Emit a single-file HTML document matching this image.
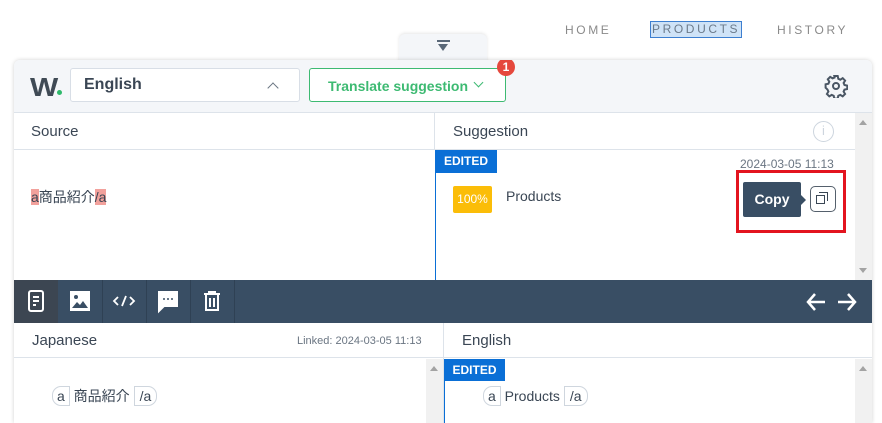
<!DOCTYPE html>
<html><head><meta charset="utf-8"><style>
*{box-sizing:border-box;margin:0;padding:0}
body{width:882px;height:423px;overflow:hidden;background:#fff;font-family:"Liberation Sans","Noto Sans CJK JP",sans-serif;color:#3a4654;position:relative}
.abs{position:absolute}
.nav{top:23px;font-size:12px;letter-spacing:2.6px;color:#8a8a8a}
</style></head><body>
<div class="abs nav" style="left:565px">HOME</div>
<div class="abs nav" style="left:651px;color:#6b7a8a;background:#cfe3f7;outline:1px solid #3d7fd0;padding:0 1px;top:22px;height:15px">PRODUCTS</div>
<div class="abs nav" style="left:777px">HISTORY</div>
<div class="abs" style="left:399px;top:34px;width:88px;height:30px;background:#f4f6f9;border-radius:6px 6px 0 0;box-shadow:0 -1px 3px rgba(0,0,0,.1)"></div>
<div class="abs" style="left:437px;top:40px;width:13px;height:2px;background:#5a6878"></div>
<div class="abs" style="left:438px;top:44px;width:0;height:0;border-left:5.5px solid transparent;border-right:5.5px solid transparent;border-top:7px solid #5a6878"></div>
<div class="abs" style="left:14px;top:60px;width:858px;height:363px;background:#fff;border-radius:6px 6px 0 0;box-shadow:0 0 4px rgba(0,0,0,.18);overflow:hidden">
 <div class="abs" style="left:0;top:0;width:858px;height:53px;background:#f4f6f9;border-bottom:1px solid #dde3ea"></div>
 <div class="abs" style="left:16px;top:12px;font-size:26px;font-weight:900;color:#3f4a55;letter-spacing:-1px;transform:scaleX(1.15);transform-origin:left">W</div>
 <div class="abs" style="left:43px;top:30px;width:5px;height:5px;border-radius:50%;background:#2eb96b"></div>
 <div class="abs" style="left:56px;top:8px;width:230px;height:34px;background:#fff;border:1px solid #d8dee6;border-radius:3px"></div>
 <div class="abs" style="left:70px;top:16px;font-size:16px;font-weight:bold;color:#3a4654">English</div>
 <div class="abs" style="left:255px;top:24px;width:8px;height:8px;border-left:1.5px solid #6a7582;border-top:1.5px solid #6a7582;transform:rotate(45deg)"></div>
 <div class="abs" style="left:295px;top:8px;width:197px;height:34px;background:#fff;border:1px solid #3dba72;border-radius:3px"></div>
 <div class="abs" style="left:314px;top:18px;font-size:14px;font-weight:bold;color:#3dba72">Translate suggestion</div>
 <div class="abs" style="left:461px;top:19px;width:7px;height:7px;border-right:1.5px solid #3dba72;border-bottom:1.5px solid #3dba72;transform:rotate(45deg)"></div>
 <div class="abs" style="left:483px;top:-2px;width:18px;height:18px;border-radius:50%;background:#e5483d;color:#fff;font-size:12px;font-weight:bold;text-align:center;line-height:18px">1</div>
 <svg class="abs" style="left:810px;top:14px" width="24" height="24" viewBox="0 0 24 24" fill="none" stroke="#4a5664" stroke-width="2"><path d="M10.3 2h3.4l.6 2.8 2 .9 2.4-1.5 2.4 2.4-1.5 2.4.9 2 2.8.6v3.4l-2.8.6-.9 2 1.5 2.4-2.4 2.4-2.4-1.5-2 .9-.6 2.8h-3.4l-.6-2.8-2-.9-2.4 1.5-2.4-2.4 1.5-2.4-.9-2L1.6 13.7v-3.4l2.8-.6.9-2-1.5-2.4 2.4-2.4 2.4 1.5 2-.9z"/><circle cx="12" cy="12" r="3"/></svg>
 <div class="abs" style="left:0;top:53px;width:841px;height:37px;border-bottom:1px solid #dde3ea"></div>
 <div class="abs" style="left:420px;top:53px;width:1px;height:37px;background:#dde3ea"></div>
 <div class="abs" style="left:17px;top:63px;font-size:15px">Source</div>
 <div class="abs" style="left:439px;top:63px;font-size:15px">Suggestion</div>
 <div class="abs" style="left:799px;top:61px;width:21px;height:21px;border:1.5px solid #cdd5de;border-radius:50%;color:#cdd5de;font-size:13px;text-align:center;line-height:18px">i</div>
 <div class="abs" style="left:841px;top:53px;width:17px;height:167px;background:#f1f1f1"></div>
 <div class="abs" style="left:845px;top:60px;border-left:4px solid transparent;border-right:4px solid transparent;border-bottom:5px solid #a3a3a3"></div>
 <div class="abs" style="left:845px;top:208px;border-left:4px solid transparent;border-right:4px solid transparent;border-top:5px solid #a3a3a3"></div>
 <div class="abs" style="left:17px;top:127px;font-size:14px;color:#3a4654"><span style="background:#f2a19c">a</span>商品紹介<span style="background:#f2a19c">/a</span></div>
 <div class="abs" style="left:421px;top:90px;width:1px;height:130px;background:#0a6fd6"></div>
 <div class="abs" style="left:421px;top:90px;width:62px;height:23px;background:#0a6fd6;color:#fff;font-size:12px;font-weight:bold;text-align:center;line-height:23px">EDITED</div>
 <div class="abs" style="left:726px;top:97px;font-size:12px;color:#6a7582">2024-03-05 11:13</div>
 <div class="abs" style="left:439px;top:126px;width:39px;height:27px;background:#fbbd08;border-radius:2px;color:#fff;font-size:12px;text-align:center;line-height:27px">100%</div>
 <div class="abs" style="left:492px;top:128px;font-size:14px">Products</div>
 <div class="abs" style="left:722px;top:110px;width:110px;height:63px;border:3px solid #e3141f"></div>
 <div class="abs" style="left:729px;top:122px;width:58px;height:35px;background:#394e64;border-radius:2px;color:#fff;font-weight:bold;font-size:14px;text-align:center;line-height:35px">Copy</div>
 <div class="abs" style="left:787px;top:135px;border-top:5px solid transparent;border-bottom:5px solid transparent;border-left:5px solid #394e64"></div>
 <div class="abs" style="left:796px;top:126px;width:26px;height:26px;border:1px solid #55606c;border-radius:5px"></div>
 <div class="abs" style="left:802px;top:135px;width:9px;height:9px;border:1.5px solid #3a4654"></div>
 <div class="abs" style="left:805px;top:132px;width:9px;height:9px;border-top:1.5px solid #3a4654;border-right:1.5px solid #3a4654"></div>
 <div class="abs" style="left:0;top:220px;width:858px;height:43px;background:#394e64"></div>
 <div class="abs" style="left:0;top:220px;width:44px;height:43px;background:#3c4652"></div>
 <div class="abs" style="left:88px;top:220px;width:1px;height:43px;background:#2f4154"></div>
 <div class="abs" style="left:132px;top:220px;width:1px;height:43px;background:#2f4154"></div>
 <div class="abs" style="left:176px;top:220px;width:1px;height:43px;background:#2f4154"></div>
 <div class="abs" style="left:220px;top:220px;width:1px;height:43px;background:#2f4154"></div>
 <svg class="abs" style="left:0;top:220px" width="240" height="43" fill="none" stroke="#fff" stroke-width="2">
  <rect x="15" y="11" width="14" height="20" rx="2"/><path d="M19 17h6M19 21h6M19 25h3"/>
  <rect x="57" y="12" width="18" height="18" fill="#fff"/><path d="M58 28l5-6 3 3 3-4 5 7z" fill="#394e64" stroke="none"/><circle cx="62" cy="17" r="2" fill="#394e64" stroke="none"/>
  <path d="M104 17l-4 4 4 4M116 17l4 4-4 4M108 26l4-10" stroke-width="1.8"/>
  <path d="M145 12h18v14h-13l-5 5z" fill="#fff"/><circle cx="150" cy="19" r="1" fill="#394e64" stroke="none"/><circle cx="154" cy="19" r="1" fill="#394e64" stroke="none"/><circle cx="158" cy="19" r="1" fill="#394e64" stroke="none"/>
  <path d="M190 14h16M195 14v-2h6v2M192 14v16h12v-16M196 18v9M200 18v9"/>
 </svg>
 <svg class="abs" style="left:790px;top:220px" width="68" height="43" fill="none" stroke="#fff" stroke-width="2.5"><path d="M4 22h17M11 14l-7 8 7 8M51 22h-17M44 14l7 8-7 8"/></svg>
 <div class="abs" style="left:0;top:263px;width:858px;height:35px;border-bottom:1px solid #dde3ea"></div>
 <div class="abs" style="left:429px;top:263px;width:1px;height:100px;background:#dde3ea"></div>
 <div class="abs" style="left:18px;top:272px;font-size:15px">Japanese</div>
 <div class="abs" style="left:283px;top:275px;font-size:11px;color:#6a7582">Linked: 2024-03-05 11:13</div>
 <div class="abs" style="left:448px;top:272px;font-size:15px">English</div>
 <div class="abs" style="left:412px;top:299px;width:17px;height:64px;background:#f1f1f1"></div>
 <div class="abs" style="left:416px;top:306px;border-left:4px solid transparent;border-right:4px solid transparent;border-bottom:5px solid #a3a3a3"></div>
 <div class="abs" style="left:841px;top:299px;width:17px;height:64px;background:#f1f1f1"></div>
 <div class="abs" style="left:845px;top:306px;border-left:4px solid transparent;border-right:4px solid transparent;border-bottom:5px solid #a3a3a3"></div>
 <div class="abs" style="left:430px;top:299px;width:1px;height:64px;background:#0a6fd6"></div>
 <div class="abs" style="left:430px;top:299px;width:61px;height:22px;background:#0a6fd6;color:#fff;font-size:12px;font-weight:bold;text-align:center;line-height:22px">EDITED</div>
 <div class="abs" style="left:38px;top:326px;font-size:14px;white-space:nowrap"><span style="display:inline-block;border:1px solid #cfd6de;border-radius:9px 0 0 9px;padding:0 4px;height:20px;line-height:18px">a</span> 商品紹介 <span style="display:inline-block;border:1px solid #cfd6de;border-radius:0 9px 9px 0;padding:0 5px;height:20px;line-height:18px">/a</span></div>
 <div class="abs" style="left:469px;top:326px;font-size:14px;white-space:nowrap"><span style="display:inline-block;border:1px solid #cfd6de;border-radius:9px 0 0 9px;padding:0 4px;height:20px;line-height:18px">a</span> Products <span style="display:inline-block;border:1px solid #cfd6de;border-radius:0 9px 9px 0;padding:0 5px;height:20px;line-height:18px">/a</span></div>
</div>
</body></html>
